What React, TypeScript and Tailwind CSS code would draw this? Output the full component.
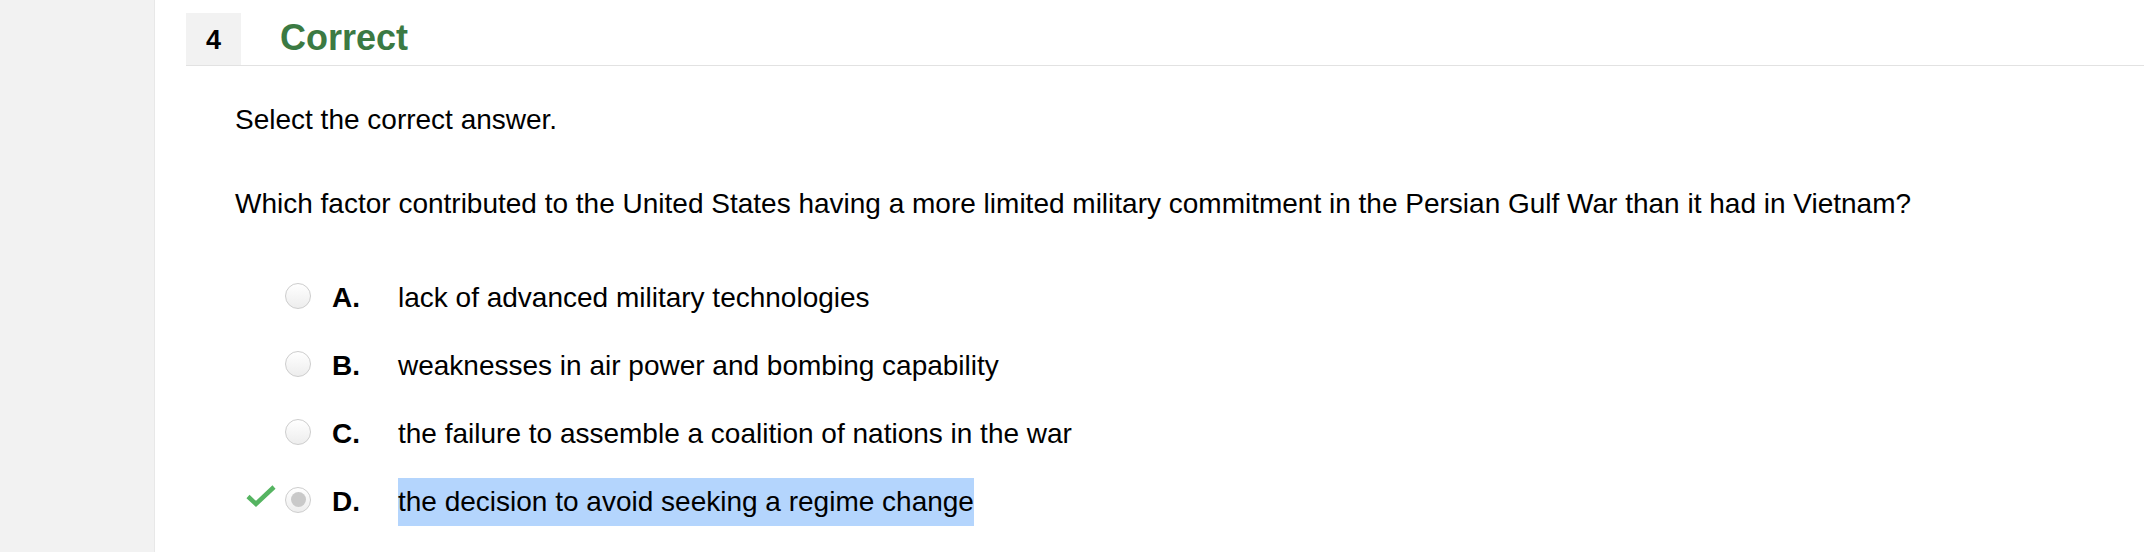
import React from 'react';

const options = [
  { key: 'A', text: 'lack of advanced military technologies' },
  { key: 'B', text: 'weaknesses in air power and bombing capability' },
  { key: 'C', text: 'the failure to assemble a coalition of nations in the war' },
  { key: 'D', text: 'the decision to avoid seeking a regime change', chosen: true },
];

const Check = () => (
  <svg width="32" height="24" viewBox="0 0 32 24" fill="none">
    <path d="M3 12.5 L11 20 L29 3" stroke="#55b461" strokeWidth="4.5" strokeLinecap="butt" strokeLinejoin="miter" />
  </svg>
);

const Radio = ({ checked }: { checked?: boolean }) => (
  <div className="w-[26px] h-[26px] rounded-full border-[1.5px] border-[#cdcdcd] bg-gradient-to-b from-white to-[#ededed] flex items-center justify-center">
    {checked && <div className="w-[15px] h-[15px] rounded-full bg-[#c9c9c9]" />}
  </div>
);

export default function App() {
  return (
    <div className="flex w-full h-[552px] bg-white text-black" style={{ fontFamily: '"Liberation Sans", Arial, sans-serif' }}>
      <div className="w-[155px] shrink-0 bg-[#f2f2f2] border-r border-[#e8e8e8]" />

      <div className="flex-1 pl-[31px] pt-[13px]">
        {/* Header */}
        <div className="flex items-stretch h-[53px] border-b border-[#e2e2e2]">
          <div className="w-[55px] bg-[#f2f2f2] flex items-center justify-center pt-[3px] text-[27px] font-bold">4</div>
          <div className="ml-[39px] flex items-center text-[36px] font-bold text-[#3b7a43] leading-none pb-[2px]">Correct</div>
        </div>

        {/* Body */}
        <div className="pl-[49px]">
          <p className="mt-[38px] text-[28px] leading-[32px]">Select the correct answer.</p>
          <p className="mt-[52px] text-[28px] leading-[32px]">
            Which factor contributed to the United States having a more limited military commitment in the Persian Gulf War than it had in Vietnam?
          </p>

          <div className="mt-[54px] ml-[10px] flex flex-col gap-[20px]">
            {options.map((o) => (
              <div key={o.key} className="flex items-center h-[48px]">
                <div className="w-[34px] flex items-center justify-start pb-[13px]">{o.chosen && <Check />}</div>
                <div className="ml-[6px] pb-[5px]">
                  <Radio checked={o.chosen} />
                </div>
                <div className="ml-[21px] w-[66px] text-[28px] font-bold">{o.key}.</div>
                <div className={`text-[28px] leading-[48px] ${o.chosen ? 'bg-[#b4d5fd]' : ''}`}>{o.text}</div>
              </div>
            ))}
          </div>
        </div>
      </div>
    </div>
  );
}
